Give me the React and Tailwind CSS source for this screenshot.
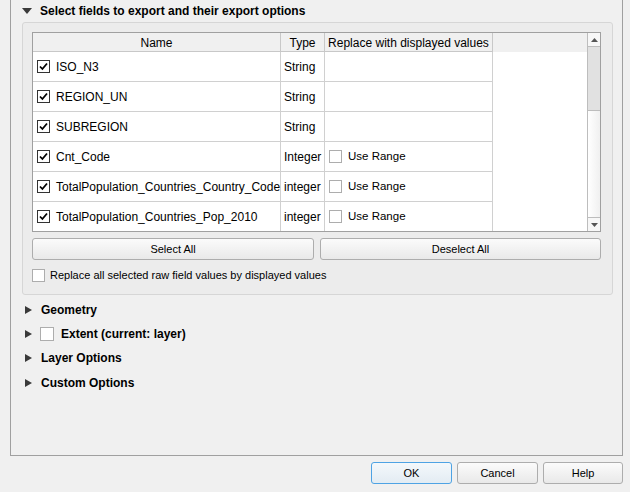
import React from 'react';

const rows = [
  { name: 'ISO_N3', type: 'String', range: false },
  { name: 'REGION_UN', type: 'String', range: false },
  { name: 'SUBREGION', type: 'String', range: false },
  { name: 'Cnt_Code', type: 'Integer', range: true },
  { name: 'TotalPopulation_Countries_Country_Code', type: 'integer', range: true },
  { name: 'TotalPopulation_Countries_Pop_2010', type: 'integer', range: true },
];

const Box = ({ checked }) => (
  <span
    className={
      checked
        ? 'w-[13px] h-[13px] shrink-0 bg-white border border-[#333333] flex items-center justify-center'
        : 'block w-[13px] h-[13px] shrink-0 bg-white border border-[#adadad]'
    }
  >
    {checked && (
      <svg width="9" height="9" viewBox="0 0 9 9">
        <path d="M1 4.5 L3.4 7 L8 1.5" fill="none" stroke="#000" strokeWidth="1.8" />
      </svg>
    )}
  </span>
);

const Arrow = () => (
  <svg width="7" height="8" viewBox="0 0 7 8" className="shrink-0">
    <polygon points="0,0 7,4 0,8" fill="#3a3a3a" />
  </svg>
);

const Button = ({ children, className }) => (
  <div
    className={`h-[22px] flex items-center justify-center rounded-[3px] border border-[#adadad] bg-gradient-to-b from-[#fbfbfb] to-[#e9e9e9] text-[11px] ${className}`}
  >
    {children}
  </div>
);

export default function App() {
  return (
    <div className="w-[630px] h-[492px] bg-[#f0f0f0] text-[12px] text-black font-['Liberation_Sans',sans-serif] overflow-hidden">
      <div className="ml-[10px] w-[613px] h-[456px] border-x border-b border-[#a0a0a0] flex flex-col">
        {/* expanded section */}
        <div className="h-[22px] flex items-center pl-[11px]">
          <svg width="10" height="6" viewBox="0 0 10 6" className="shrink-0">
            <polygon points="0,0 10,0 5,6" fill="#3a3a3a" />
          </svg>
          <span className="ml-[8px] font-bold">Select fields to export and their export options</span>
        </div>

        <div className="ml-[11px] w-[591px] h-[273px] border border-[#d6d6d6] rounded-[3px] bg-[#ececec] pt-[9px] pl-[9px] flex flex-col">
          {/* table */}
          <div className="w-[569px] h-[200px] border border-[#a0a0a0] bg-white flex overflow-hidden">
            <div className="w-[554px] flex flex-col">
              <div className="h-[19px] flex bg-[#f0f0f0] shrink-0">
                <div className="w-[248px] border-r border-b border-[#c8c8c8] flex items-center justify-center pt-[1px]">Name</div>
                <div className="w-[44px] border-r border-b border-[#c8c8c8] flex items-center justify-center pt-[1px]">Type</div>
                <div className="w-[168px] border-r border-b border-[#c8c8c8] flex items-center justify-center pt-[1px]">Replace with displayed values</div>
              </div>
              {rows.map((r) => (
                <div key={r.name} className="h-[30px] flex shrink-0">
                  <div className="w-[248px] border-r border-b border-[#d0d0d0] flex items-center pl-[4px] gap-[6px] whitespace-nowrap">
                    <Box checked />
                    <span>{r.name}</span>
                  </div>
                  <div className="w-[44px] border-r border-b border-[#d0d0d0] flex items-center pl-[3px]">{r.type}</div>
                  <div className="w-[168px] border-r border-b border-[#d0d0d0] flex items-center pl-[4px] gap-[6px]">
                    {r.range && (
                      <>
                        <Box />
                        <span className="text-[11.5px]">Use Range</span>
                      </>
                    )}
                  </div>
                </div>
              ))}
            </div>
            {/* scrollbar */}
            <div className="w-[13px] border-l border-[#bdbdbd] flex flex-col bg-gradient-to-r from-white to-[#f0f0f0]">
              <div className="h-[14px] flex items-center justify-center bg-[#f7f7f7] border-b border-[#bdbdbd]">
                <svg width="7" height="4" viewBox="0 0 7 4">
                  <polygon points="0,4 7,4 3.5,0" fill="#555" />
                </svg>
              </div>
              <div className="h-[64px] bg-[#e1e1e1] border-b border-[#bdbdbd]"></div>
              <div className="flex-1"></div>
              <div className="h-[14px] flex items-center justify-center bg-[#f7f7f7] border-t border-[#bdbdbd]">
                <svg width="7" height="4" viewBox="0 0 7 4">
                  <polygon points="0,0 7,0 3.5,4" fill="#555" />
                </svg>
              </div>
            </div>
          </div>

          <div className="mt-[6px] w-[569px] flex gap-[6px]">
            <Button className="w-[282px]">Select All</Button>
            <Button className="w-[281px]">Deselect All</Button>
          </div>

          <div className="mt-[7px] flex items-center gap-[5px]">
            <Box />
            <span className="text-[11px]">Replace all selected raw field values by displayed values</span>
          </div>
        </div>

        {/* collapsed sections */}
        <div className="pt-[3px] flex flex-col font-bold">
          <div className="h-[24px] flex items-center pl-[14px] gap-[9px]">
            <Arrow />
            <span>Geometry</span>
          </div>
          <div className="h-[23px] flex items-center pl-[14px]">
            <Arrow />
            <span className="ml-[8px] block w-[14px] h-[14px] bg-white border border-[#adadad]"></span>
            <span className="ml-[7px]">Extent (current: layer)</span>
          </div>
          <div className="h-[25px] flex items-center pl-[14px] gap-[9px]">
            <Arrow />
            <span>Layer Options</span>
          </div>
          <div className="h-[25px] flex items-center pl-[14px] gap-[9px]">
            <Arrow />
            <span>Custom Options</span>
          </div>
        </div>
      </div>

      <div className="mt-[6px] flex justify-end gap-[5px] pr-[7px] text-[11px]">
        <div className="w-[81px] h-[22px] flex items-center justify-center rounded-[3px] border border-[#4ea3e4] bg-gradient-to-b from-[#f4f8fb] to-[#e3ecf3]">OK</div>
        <Button className="w-[81px]">Cancel</Button>
        <Button className="w-[80px]">Help</Button>
      </div>
    </div>
  );
}
